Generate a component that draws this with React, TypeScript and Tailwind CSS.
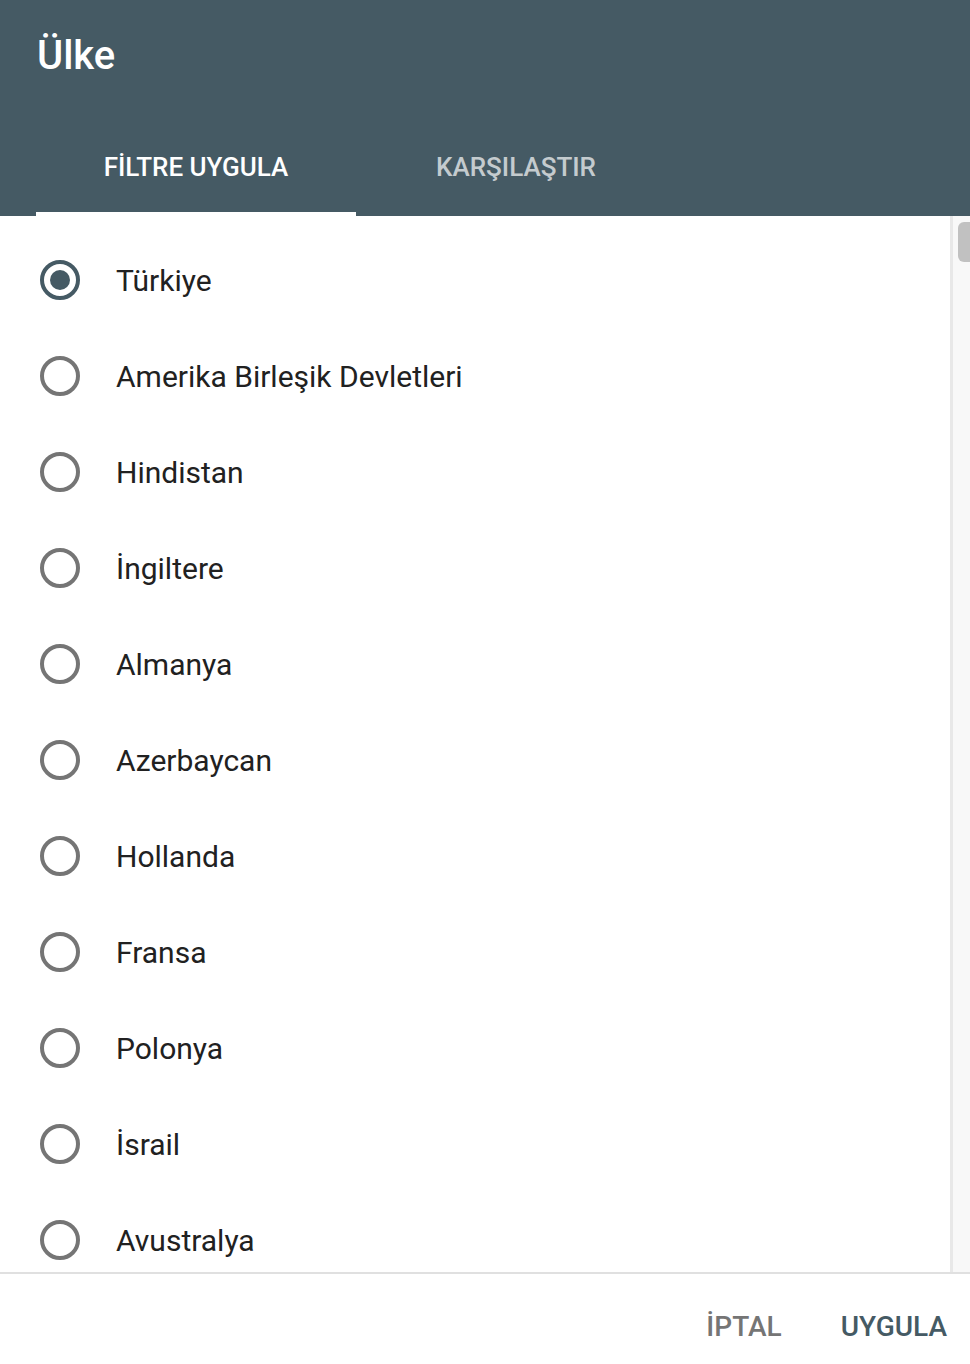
import { useState } from "react";

const countries = [
  "Türkiye",
  "Amerika Birleşik Devletleri",
  "Hindistan",
  "İngiltere",
  "Almanya",
  "Azerbaycan",
  "Hollanda",
  "Fransa",
  "Polonya",
  "İsrail",
  "Avustralya",
];

const Radio = ({ checked }: { checked: boolean }) => (
  <span
    className={`flex items-center justify-center w-[40px] h-[40px] shrink-0 rounded-full border-[4px] ${
      checked ? "border-[#455a64]" : "border-[#757575]"
    }`}
  >
    {checked && <span className="w-[20px] h-[20px] rounded-full bg-[#455a64]"></span>}
  </span>
);

const App = () => {
  const [selected, setSelected] = useState("Türkiye");
  const [tab, setTab] = useState(0);

  return (
    <div className="w-[970px] h-[1364px] flex flex-col bg-white font-['Roboto',sans-serif] overflow-hidden">
      {/* baslik */}
      <div className="h-[216px] shrink-0 bg-[#455a64] flex flex-col">
        <h1 className="mt-[36px] pl-[37px] text-[40px] leading-[40px] font-medium text-white">
          Ülke
        </h1>
        <div className="mt-[44px] pl-[36px] flex">
          {["FİLTRE UYGULA", "KARŞILAŞTIR"].map((t, i) => (
            <button
              key={t}
              onClick={() => setTab(i)}
              className={`relative w-[320px] h-[96px] pb-[2px] flex items-center justify-center text-[26px] leading-[26px] font-medium ${
                tab === i ? "text-white" : "text-white/70"
              }`}
            >
              {t}
              {tab === i && (
                <span className="absolute left-0 bottom-0 w-full h-[4px] bg-white"></span>
              )}
            </button>
          ))}
        </div>
      </div>

      {/* liste */}
      <div className="h-[1056px] shrink-0 flex">
        <ul className="flex-1 pt-[16px] overflow-hidden">
          {countries.map((c) => (
            <li
              key={c}
              onClick={() => setSelected(c)}
              className="h-[96px] flex items-center pl-[40px] gap-x-[36px] cursor-pointer"
            >
              <Radio checked={selected === c} />
              <span className="pt-[2px] text-[30px] leading-[30px] text-[#212121]">{c}</span>
            </li>
          ))}
        </ul>
        <div className="w-[20px] shrink-0 border-l-[3px] border-[#e8e8e8] bg-[#f8f8f8] pl-[5px] pt-[6px]">
          <div className="w-[12px] h-[40px] rounded-l-[6px] bg-[#c1c1c1]"></div>
        </div>
      </div>

      {/* alt butonlar */}
      <div className="flex-1 border-t-[2px] border-[#e0e0e0] flex justify-end items-start pt-[39px] pr-[23px] gap-x-[59px]">
        <button className="text-[28px] leading-[28px] font-medium text-[#757575]">İPTAL</button>
        <button className="text-[28px] leading-[28px] font-medium text-[#455a64]">UYGULA</button>
      </div>
    </div>
  );
};

export default App;
